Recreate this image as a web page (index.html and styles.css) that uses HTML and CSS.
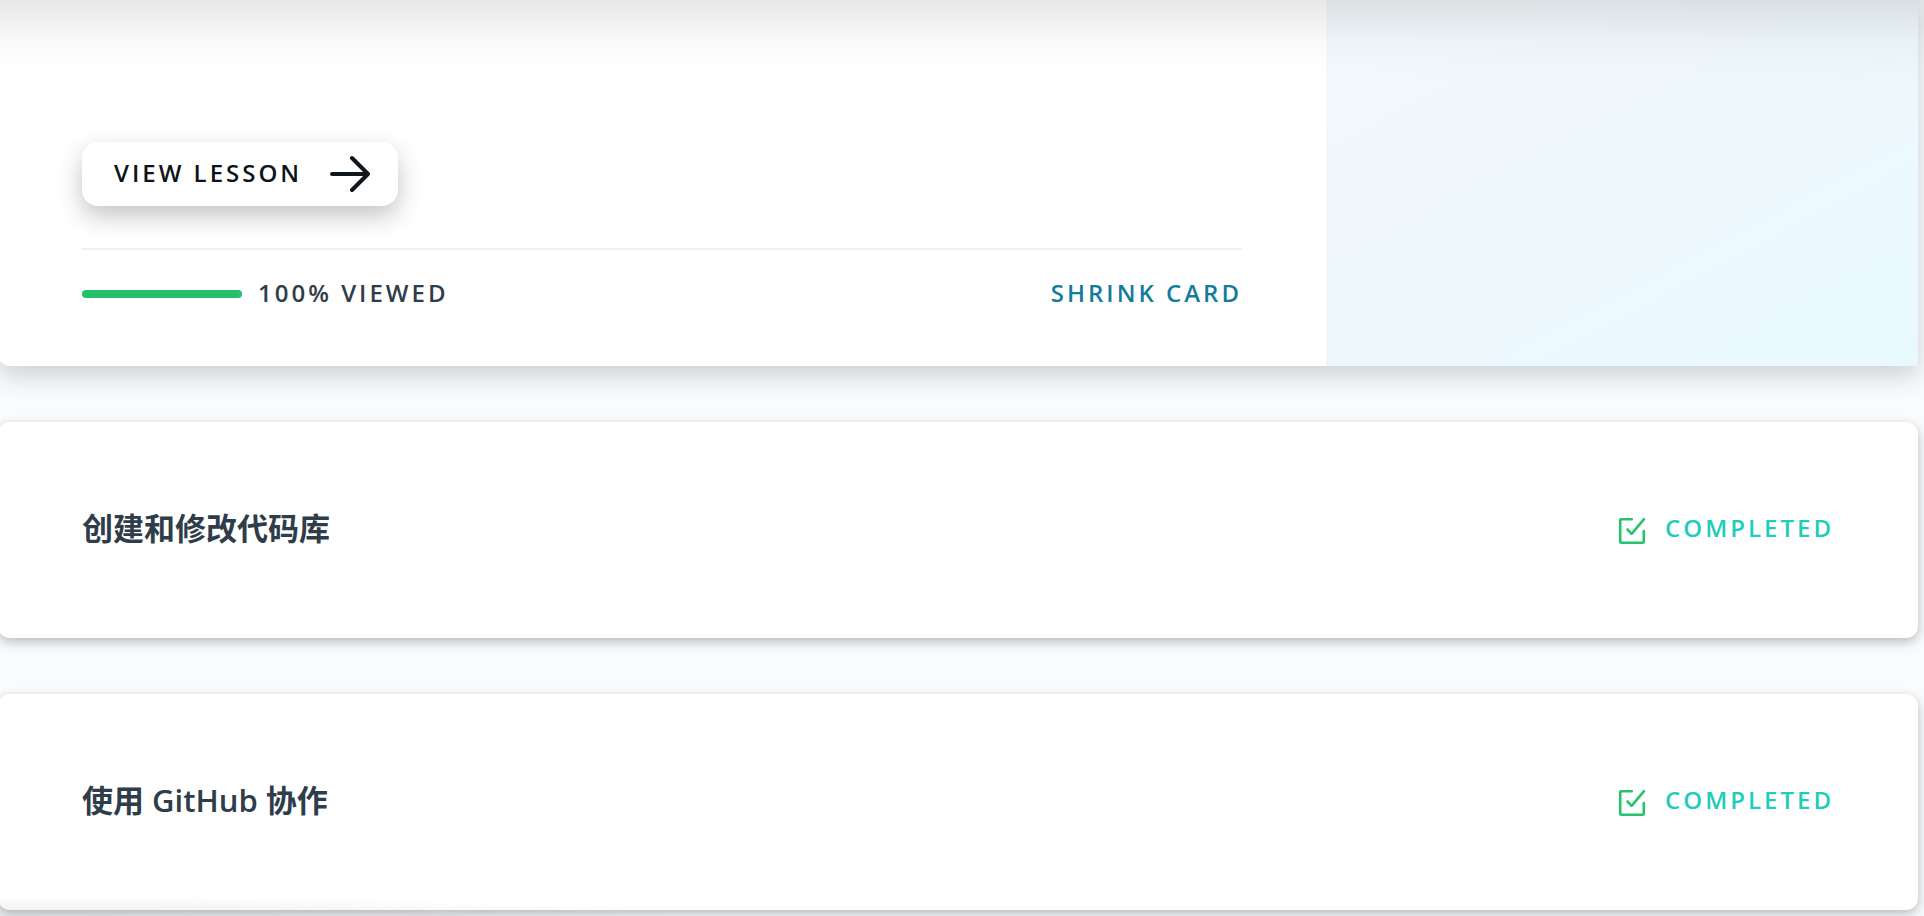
FILE: index.html
```html
<!DOCTYPE html>
<html lang="zh-CN">
<head>
<meta charset="utf-8">
<meta name="viewport" content="width=device-width, initial-scale=1">
<title>Lessons</title>
<link rel="stylesheet" href="styles.css">
</head>
<body>
<main class="lessons">
  <article class="card card-open">
    <div class="card-main">
      <button class="view-button" type="button">
        <span>VIEW LESSON</span>
        <svg class="arrow" viewBox="0 0 40 40" aria-hidden="true"><path d="M2 20H38M22 4L38 20L22 36"/></svg>
      </button>
      <footer class="card-footer">
        <div class="viewed">
          <div class="track"><div class="track-fill" style="width: 100%"></div></div>
          <span>100% VIEWED</span>
        </div>
        <button class="shrink-button" type="button">SHRINK CARD</button>
      </footer>
    </div>
    <div class="card-art"></div>
  </article>
  <article class="card card-closed">
    <h2 class="title">创建和修改代码库</h2>
    <div class="status">
      <svg class="check" viewBox="0 0 26 26" aria-hidden="true"><path d="M12.8 1.2H2.2Q1.2 1.2 1.2 2.2V23.8Q1.2 24.8 2.2 24.8H23.8Q24.8 24.8 24.8 23.8V13M8.5 11.5L12.6 15.8L25 1.2"/></svg>
      <span>COMPLETED</span>
    </div>
  </article>
  <article class="card card-closed">
    <h2 class="title">使用 GitHub 协作</h2>
    <div class="status">
      <svg class="check" viewBox="0 0 26 26" aria-hidden="true"><path d="M12.8 1.2H2.2Q1.2 1.2 1.2 2.2V23.8Q1.2 24.8 2.2 24.8H23.8Q24.8 24.8 24.8 23.8V13M8.5 11.5L12.6 15.8L25 1.2"/></svg>
      <span>COMPLETED</span>
    </div>
  </article>
</main>
<div class="header-shade"></div>
<div class="corner-shade"></div>
</body>
</html>
```

FILE: styles.css
```css
* { box-sizing: border-box; }

body {
  margin: 0;
  overflow-x: hidden;
  background: #fafbfd;
  color: #2e3d49;
  font-family: "Open Sans", "Noto Sans CJK SC", sans-serif;
  font-size: 24px;
  font-weight: 600;
  line-height: 32px;
  letter-spacing: 3px;
}

button {
  border: 0;
  padding: 0;
  background: none;
  font: inherit;
  letter-spacing: inherit;
  cursor: pointer;
}

.lessons {
  display: flex;
  flex-direction: column;
  gap: 56px;
  margin: 0 6px 0 -2px;
  padding-bottom: 6px;
}

.card {
  display: flex;
  border-radius: 12px;
  background: #fff;
}

.card-open {
  border-radius: 0 0 0 12px;
  box-shadow: 0 10px 24px rgba(46, 61, 73, 0.22);
}

.card-main {
  flex: 1;
  padding: 142px 84px 56px;
}

.view-button {
  display: flex;
  align-items: center;
  gap: 28px;
  height: 64px;
  padding: 0 28px 0 32px;
  border-radius: 16px;
  background: #fff;
  color: #0b1418;
  box-shadow: 0 10px 24px rgba(20, 30, 25, 0.26);
}

.view-button span,
.viewed span,
.shrink-button { padding-bottom: 2px; }

.arrow {
  width: 40px;
  height: 40px;
  fill: none;
  stroke: #0f171c;
  stroke-width: 4;
  stroke-linecap: round;
  stroke-linejoin: round;
}

.card-footer {
  display: flex;
  align-items: center;
  justify-content: space-between;
  margin-top: 42px;
  padding-top: 27px;
  border-top: 2px solid #ebf1f6;
}

.card-main { padding-bottom: 55px; }

.viewed {
  display: flex;
  align-items: center;
  gap: 16px;
}

.track {
  width: 160px;
  height: 8px;
  border-radius: 4px;
  background: #dbe2e8;
}

.track-fill {
  height: 100%;
  border-radius: 4px;
  background: #26c06c;
}

.shrink-button { color: #137c9c; }

.card-art {
  width: 592px;
  background: linear-gradient(152deg, #f2f8fb 12%, #eef7fa 45%, #edf8fa 60%, #ecf9ff 68%, #e8f9fe);
}

.card-closed {
  align-items: center;
  justify-content: space-between;
  height: 216px;
  padding: 0 84px 4px;
  box-shadow: 0 4px 12px rgba(0, 0, 0, 0.26);
}

.title {
  margin: 0;
  font-size: 31px;
  font-weight: 600;
  line-height: 40px;
  letter-spacing: 0;
}

.status {
  display: flex;
  align-items: flex-end;
  gap: 20px;
  color: #20cdbb;
}

.check {
  width: 26px;
  height: 26px;
  overflow: visible;
  fill: none;
  stroke: #27c26b;
  stroke-width: 2.6;
  stroke-linecap: round;
  stroke-linejoin: round;
}

.header-shade {
  position: fixed;
  inset: 0 0 auto;
  height: 84px;
  background: linear-gradient(rgba(0, 0, 0, 0.09), rgba(0, 0, 0, 0.05) 28%, rgba(0, 0, 0, 0.02) 50%, rgba(0, 0, 0, 0.004) 78%, transparent);
  pointer-events: none;
}

.corner-shade {
  position: fixed;
  left: 0;
  bottom: 0;
  width: 680px;
  height: 20px;
  background: radial-gradient(ellipse farthest-side at 0 100%, rgba(0, 0, 0, 0.05), rgba(0, 0, 0, 0.03) 60%, transparent);
  pointer-events: none;
}
```
